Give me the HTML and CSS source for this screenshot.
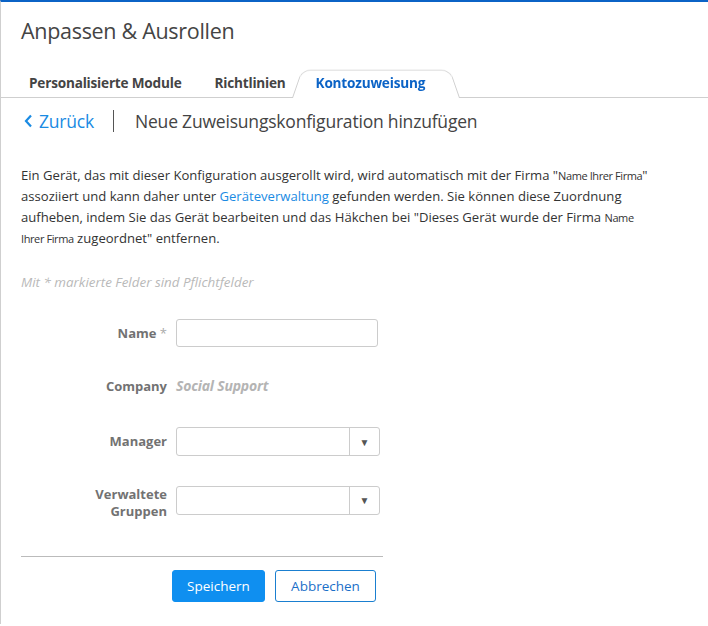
FILE: index.html
```html
<!DOCTYPE html>
<html lang="de">
<head>
  <meta charset="UTF-8" />
  <title>Anpassen &amp; Ausrollen</title>
  <link rel="stylesheet" href="styles.css">
</head>
<body>
  <div class="page">
    <h1 class="title">Anpassen &amp; Ausrollen</h1>

    <div class="tabs">
      <a class="tab">Personalisierte Module</a>
      <a class="tab">Richtlinien</a>
      <a class="tab active">Kontozuweisung</a>
    </div>

    <div class="subhead">
      <a class="back">
        <svg width="9" height="14" viewBox="0 0 9 14"><path d="M7 1.5 L2 7 L7 12.5" fill="none" stroke="#1a8be3" stroke-width="2.2"/></svg>
        Zurück
      </a>
      <span class="divider"></span>
      <span class="subtitle">Neue Zuweisungskonfiguration hinzufügen</span>
    </div>

    <p class="info">
      Ein Gerät, das mit dieser Konfiguration ausgerollt wird, wird automatisch mit der Firma "<span class="small">Name Ihrer Firma</span>"
      assoziiert und kann daher unter <a class="link">Geräteverwaltung</a> gefunden werden. Sie können diese Zuordnung
      aufheben, indem Sie das Gerät bearbeiten und das Häkchen bei "Dieses Gerät wurde der Firma <span class="small">Name
      Ihrer Firma</span> zugeordnet" entfernen.
    </p>

    <p class="required-note">Mit * markierte Felder sind Pflichtfelder</p>

    <form class="form">
      <div class="row row-name">
        <label class="label" for="name">Name <span class="star">*</span></label>
        <input class="input" id="name" type="text">
      </div>
      <div class="row row-company">
        <span class="label">Company</span>
        <span class="static">Social Support</span>
      </div>
      <div class="row row-manager">
        <span class="label">Manager</span>
        <div class="select"><span class="select-value"></span><span class="select-arrow">&#9660;</span></div>
      </div>
      <div class="row row-groups">
        <span class="label">Verwaltete<br>Gruppen</span>
        <div class="select"><span class="select-value"></span><span class="select-arrow">&#9660;</span></div>
      </div>

      <div class="actions">
        <button type="button" class="btn primary">Speichern</button>
        <button type="button" class="btn secondary">Abbrechen</button>
      </div>
    </form>
  </div>
</body>
</html>
```

FILE: styles.css
```css
body {
  margin: 0;
  font-family: "Open Sans", Arial, sans-serif;
  color: #333;
  background: #fff;
}

.page {
  border-top: 2px solid #0b63c6;
  border-left: 1px solid #cfcfcf;
  min-height: 624px;
  box-sizing: border-box;
}

.title {
  margin: 0;
  padding: 16px 0 0 20px;
  height: 48px;
  box-sizing: border-box;
  font-size: 21.5px;
  font-weight: 400;
  letter-spacing: -0.3px;
  color: #444;
  line-height: 26px;
}

.tabs {
  display: flex;
  align-items: flex-end;
  margin-top: 15px;
  padding-left: 20px;
  height: 32px;
  border-bottom: 1px solid #cfcfcf;
}

.tab {
  font-size: 13.6px;
  font-weight: 700;
  letter-spacing: -0.2px;
  color: #444;
  padding: 0 8px 5px 8px;
  margin-right: 17px;
}

.tab.active {
  position: relative;
  z-index: 0;
  color: #0b63c6;
  margin-left: -19px;
  padding: 0 34px 6px 24px;
  margin-bottom: -1px;
  height: 33px;
  box-sizing: border-box;
  display: flex;
  align-items: flex-end;
}

.tab.active::before {
  content: "";
  position: absolute;
  left: 0;
  right: 0;
  top: 0;
  bottom: 0;
  border: 1px solid #cfcfcf;
  border-bottom: none;
  border-radius: 10px 10px 0 0;
  transform: perspective(60px) rotateX(14deg);
  transform-origin: bottom;
  background: #fff;
  z-index: -1;
}

.subhead {
  display: flex;
  align-items: center;
  height: 46px;
  padding-left: 23px;
}

.back {
  display: flex;
  align-items: center;
  gap: 6px;
  font-size: 17.5px;
  color: #1a8be3;
  letter-spacing: -0.2px;
}

.divider {
  width: 1px;
  height: 22px;
  background: #555;
  margin: 0 21px 0 19px;
}

.subtitle {
  font-size: 17.5px;
  color: #444;
  letter-spacing: -0.2px;
}

.info {
  margin: 21px 53px 0 20px;
  font-size: 13.1px;
  line-height: 21px;
  color: #333;
}

.small {
  font-size: 11px;
  letter-spacing: -0.4px;
}

.link {
  color: #1a8be3;
}

.required-note {
  margin: 24px 0 0 20px;
  font-size: 13.4px;
  font-style: italic;
  color: #b9b9b9;
}

.form {
  margin-top: 28px;
  width: 362px;
  margin-left: 20px;
}

.row {
  display: flex;
  align-items: center;
}

.row-company {
  margin-top: 25px;
  height: 28px;
}

.row-manager {
  margin-top: 27px;
}

.row-groups {
  margin-top: 24px;
}

.label {
  width: 146px;
  text-align: right;
  padding-right: 9px;
  font-size: 13px;
  font-weight: 700;
  color: #727272;
  line-height: 17px;
}

.row-groups .label {
  padding-top: 6px;
}

.star {
  color: #aaa;
  font-weight: 400;
}

.input {
  width: 202px;
  height: 28px;
  box-sizing: border-box;
  border: 1px solid #ccc;
  border-radius: 3px;
}

.static {
  font-size: 14px;
  font-weight: 700;
  font-style: italic;
  color: #b4b4b4;
  letter-spacing: -0.2px;
  line-height: 28px;
}

.select {
  display: flex;
  width: 204px;
  height: 29px;
  box-sizing: border-box;
  border: 1px solid #ccc;
  border-radius: 3px;
}

.select-value {
  flex: 1;
  border-right: 1px solid #ccc;
}

.select-arrow {
  width: 29px;
  display: flex;
  align-items: center;
  justify-content: center;
  font-size: 10px;
  color: #555;
}

.actions {
  display: flex;
  gap: 10px;
  padding: 13px 0 0 151px;
  border-top: 1px solid #bbb;
  margin-top: 36px;
}

.btn {
  font-family: "Open Sans", Arial, sans-serif;
  font-size: 13.5px;
  height: 32px;
  border-radius: 3px;
  cursor: pointer;
}

.btn.primary {
  width: 93px;
  background: #0f8ff0;
  border: 1px solid #0f8ff0;
  color: #fff;
}

.btn.secondary {
  width: 101px;
  background: #fff;
  border: 1px solid #1a7fd0;
  color: #1a6fc8;
}
```
